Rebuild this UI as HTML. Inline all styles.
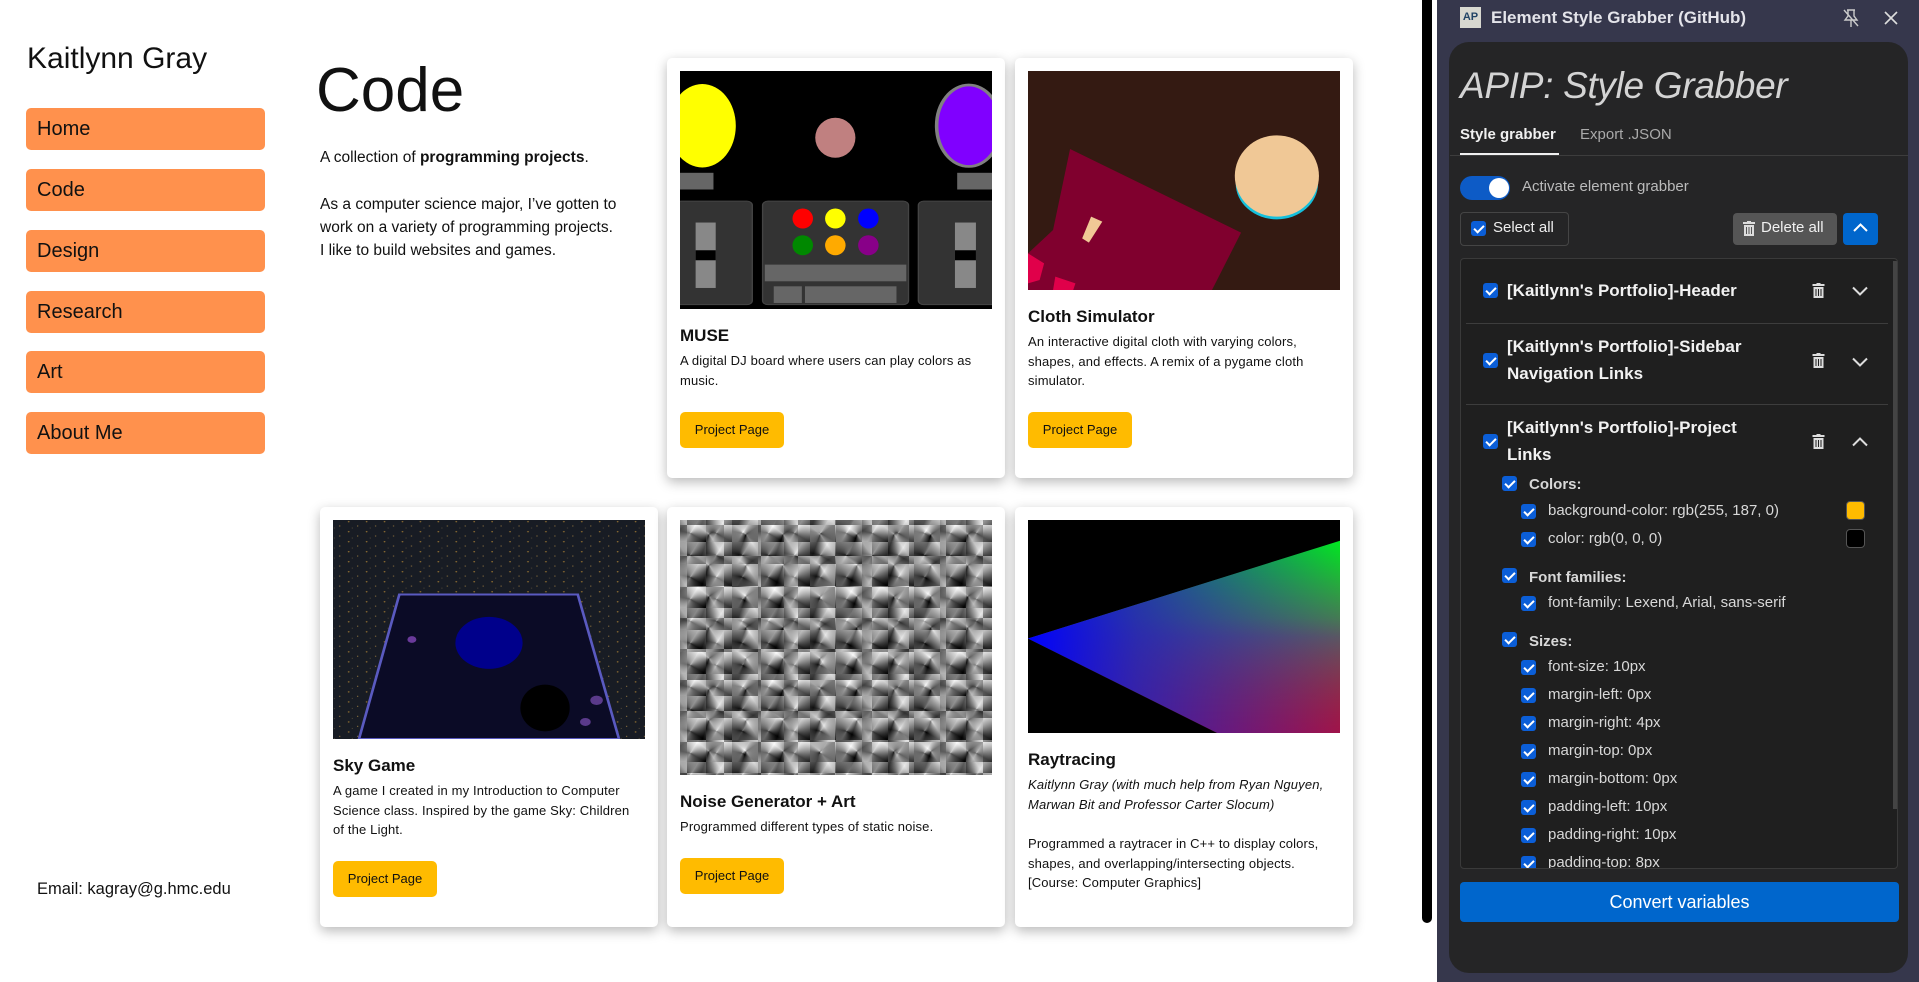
<!DOCTYPE html>
<html><head><meta charset="utf-8">
<style>
*{margin:0;padding:0;box-sizing:border-box}
body{width:1919px;height:982px;background:#fff;font-family:"Liberation Sans",Arial,sans-serif;position:relative;overflow:hidden;color:#000}
.a{position:absolute}
.nav{position:absolute;left:26px;width:239px;height:42px;background:#ff914d;border-radius:5px;font-size:20px;line-height:42px;padding-left:11px;color:#111}
.card{position:absolute;width:338px;height:420px;background:#fff;border-radius:5px;box-shadow:0 4px 12px rgba(0,0,0,.28)}
.img{position:absolute;left:13px;top:13px;width:312px;overflow:hidden}
.ct{position:absolute;left:13px;font-size:17px;font-weight:bold;color:#111;white-space:nowrap}
.cd{position:absolute;left:13px;width:318px;font-size:13px;letter-spacing:.15px;line-height:19.5px;color:#111;white-space:nowrap}
.btn{position:absolute;left:13px;width:104px;height:36px;background:#ffbb00;border-radius:5px;font-size:13px;line-height:36px;text-align:center;color:#111}
.cb{position:absolute;width:15px;height:15px;background:#0b5ed7;border-radius:3px}
.cb:after{content:"";position:absolute;left:5px;top:2px;width:4px;height:8px;border:solid #fff;border-width:0 2px 2px 0;transform:rotate(45deg)}
.it{position:absolute;left:1507px;font-size:17px;font-weight:bold;color:#f2f2f2;line-height:27px}
.sub{position:absolute;font-size:15px;color:#d8d8d8;white-space:nowrap}
.sh{position:absolute;font-size:15px;font-weight:bold;color:#d8d8d8}
.div{position:absolute;left:1466px;width:422px;height:1px;background:#3d3d3d}
</style></head><body>

<div class="a" style="left:27px;top:42px;font-size:30px;color:#111">Kaitlynn Gray</div>
<div class="nav" style="top:108px">Home</div>
<div class="nav" style="top:169px">Code</div>
<div class="nav" style="top:230px">Design</div>
<div class="nav" style="top:291px">Research</div>
<div class="nav" style="top:351px">Art</div>
<div class="nav" style="top:412px">About Me</div>
<div class="a" style="left:37px;top:880px;font-size:16.5px;color:#111">Email: kagray@g.hmc.edu</div>

<div class="a" style="left:316px;top:55px;font-size:62px;color:#111">Code</div>
<div class="a" style="left:320px;top:149px;font-size:15.5px;color:#111">A collection of <b>programming projects</b>.</div>
<div class="a" style="left:320px;top:193px;font-size:15.5px;line-height:23px;color:#111;white-space:nowrap">As a computer science major, I’ve gotten to<br>work on a variety of programming projects.<br>I like to build websites and games.</div>

<!-- MUSE -->
<div class="card" style="left:667px;top:58px">
 <div class="img" style="height:238px">
 <svg width="312" height="238" viewBox="45 63 699 713" preserveAspectRatio="none">
  <rect x="45" y="63" width="699" height="713" fill="#000"/>
  <ellipse cx="95" cy="227" rx="75" ry="125" fill="#ffff00"/>
  <ellipse cx="393" cy="263" rx="45" ry="60" fill="#c08080"/>
  <ellipse cx="692" cy="227" rx="72" ry="122" fill="#8000ff" stroke="#808080" stroke-width="8"/>
  <rect x="40" y="368" width="80" height="50" fill="#666"/>
  <rect x="666" y="368" width="80" height="50" fill="#666"/>
  <rect x="35" y="453" width="172" height="310" rx="12" fill="#333" stroke="#444" stroke-width="3"/>
  <rect x="80" y="517" width="45" height="196" fill="#888"/><rect x="80" y="600" width="45" height="30" fill="#000"/>
  <rect x="230" y="453" width="327" height="310" rx="12" fill="#333" stroke="#444" stroke-width="3"/>
  <ellipse cx="320" cy="505" rx="23" ry="30" fill="#f00"/><ellipse cx="393" cy="505" rx="23" ry="30" fill="#ff0"/><ellipse cx="467" cy="505" rx="23" ry="30" fill="#00f"/>
  <ellipse cx="320" cy="585" rx="23" ry="30" fill="#080"/><ellipse cx="393" cy="585" rx="23" ry="30" fill="#fa0"/><ellipse cx="467" cy="585" rx="23" ry="30" fill="#808"/>
  <rect x="235" y="643" width="317" height="50" fill="#666"/>
  <rect x="255" y="708" width="63" height="50" fill="#666"/><rect x="325" y="708" width="205" height="50" fill="#666"/>
  <rect x="579" y="453" width="180" height="310" rx="12" fill="#333" stroke="#444" stroke-width="3"/>
  <rect x="661" y="517" width="47" height="196" fill="#888"/><rect x="661" y="600" width="47" height="30" fill="#000"/>
 </svg></div>
 <div class="ct" style="top:268px">MUSE</div>
 <div class="cd" style="top:293px">A digital DJ board where users can play colors as<br>music.</div>
 <div class="btn" style="top:354px">Project Page</div>
</div>

<!-- Cloth -->
<div class="card" style="left:1015px;top:58px">
 <div class="img" style="height:219px">
 <svg width="312" height="219" viewBox="824 63 697 657" preserveAspectRatio="none">
  <rect x="824" y="63" width="697" height="657" fill="#341a12"/>
  <polygon points="918,297 1300,548 1235,720 824,720 824,610 880,540" fill="#80002e"/>
  <polygon points="824,610 860,640 850,690 824,700" fill="#e0004a"/>
  <polygon points="885,680 930,700 925,720 880,720" fill="#e0004a"/>
  <polygon points="965,500 990,515 960,578 945,565" fill="#f0c896"/>
  <ellipse cx="1380" cy="400" rx="92" ry="108" fill="#15c0dc"/>
  <ellipse cx="1380" cy="378" rx="94" ry="122" fill="#f0c896"/>
 </svg></div>
 <div class="ct" style="top:249px">Cloth Simulator</div>
 <div class="cd" style="top:274px">An interactive digital cloth with varying colors,<br>shapes, and effects. A remix of a pygame cloth<br>simulator.</div>
 <div class="btn" style="top:354px">Project Page</div>
</div>

<!-- Sky -->
<div class="card" style="left:320px;top:507px">
 <div class="img" style="height:219px">
 <svg width="312" height="219" viewBox="52 60 696 656" preserveAspectRatio="none">
  <defs><radialGradient id="gl" cx="0.5" cy="1" r="0.5"><stop offset="0" stop-color="#8080ff"/><stop offset="1" stop-color="#0a0a28" stop-opacity="0"/></radialGradient>
  <pattern id="st" width="40" height="30" patternUnits="userSpaceOnUse"><rect width="40" height="30" fill="#181c24"/><circle cx="7" cy="5" r="2" fill="#8a6a30"/><circle cx="27" cy="18" r="1.6" fill="#9a7a40"/><circle cx="15" cy="24" r="1.3" fill="#6a5a40"/></pattern></defs>
  <rect x="52" y="60" width="696" height="656" fill="url(#st)"/>
  <polygon points="200,283 598,283 690,716 110,716" fill="#0b0b26" stroke="#5a5ac0" stroke-width="6"/>
  <ellipse cx="400" cy="716" rx="120" ry="80" fill="url(#gl)"/>
  <ellipse cx="400" cy="428" rx="75" ry="78" fill="#00008b"/>
  <ellipse cx="525" cy="623" rx="55" ry="70" fill="#000"/>
  <circle cx="228" cy="418" r="10" fill="#6a3a9a"/>
  <circle cx="640" cy="600" r="14" fill="#5a3a8a"/><circle cx="615" cy="665" r="12" fill="#5a3a8a"/>
 </svg></div>
 <div class="ct" style="top:249px">Sky Game</div>
 <div class="cd" style="top:274px">A game I created in my Introduction to Computer<br>Science class. Inspired by the game Sky: Children<br>of the Light.</div>
 <div class="btn" style="top:354px">Project Page</div>
</div>

<!-- Noise -->
<div class="card" style="left:667px;top:507px">
 <div class="img" style="height:255px;background:
  conic-gradient(from 30deg at 40% 60%,#fff,#000 25%,#999 50%,#222 70%,#eee) 0 0/26px 22px,
  #888"></div>
 <div class="img" style="height:255px;opacity:.55;background:
  conic-gradient(from 200deg at 60% 30%,#000,#fff 30%,#555 60%,#ddd 85%,#000) 7px 5px/37px 31px"></div>
 <div class="ct" style="top:285px">Noise Generator + Art</div>
 <div class="cd" style="top:310px">Programmed different types of static noise.</div>
 <div class="btn" style="top:351px">Project Page</div>
</div>

<!-- Ray -->
<div class="card" style="left:1015px;top:507px">
 <div class="img" style="height:213px">
 <svg width="312" height="213" viewBox="84 60 933 638" preserveAspectRatio="none">
  <defs>
   <linearGradient id="v" x1="0" y1="0" x2="0" y2="1"><stop offset="0" stop-color="#00e820"/><stop offset="0.5" stop-color="#556060"/><stop offset="1" stop-color="#b83010"/></linearGradient>
   <linearGradient id="h" x1="84" y1="0" x2="1017" y2="0" gradientUnits="userSpaceOnUse"><stop offset="0" stop-color="#0000ff"/><stop offset="0.35" stop-color="#2020c0" stop-opacity=".8"/><stop offset="1" stop-color="#2020c0" stop-opacity="0"/></linearGradient>
   <linearGradient id="m" x1="0" y1="0" x2="0" y2="1"><stop offset="0.4" stop-color="#800080" stop-opacity="0"/><stop offset="1" stop-color="#900070" stop-opacity=".6"/></linearGradient>
  </defs>
  <rect x="84" y="60" width="933" height="638" fill="#000"/>
  <polygon points="84,415 1017,122 1017,698 650,698" fill="url(#v)"/>
  <polygon points="84,415 1017,122 1017,698 650,698" fill="url(#m)"/>
  <polygon points="84,415 1017,122 1017,698 650,698" fill="url(#h)"/>
 </svg></div>
 <div class="ct" style="top:243px">Raytracing</div>
 <div class="cd" style="top:268px;font-style:italic">Kaitlynn Gray (with much help from Ryan Nguyen,<br>Marwan Bit and Professor Carter Slocum)</div>
 <div class="cd" style="top:327px">Programmed a raytracer in C++ to display colors,<br>shapes, and overlapping/intersecting objects.<br>[Course: Computer Graphics]</div>
</div>

<!-- black scrollbar -->
<div class="a" style="left:1422px;top:0;width:10px;height:923px;background:#000;border-radius:0 0 5px 5px"></div>

<!-- extension panel -->
<div class="a" style="left:1437px;top:0;width:482px;height:982px;background:#36374c"></div>
<div class="a" style="left:1460px;top:7px;width:21px;height:21px;background:#d8d8d0;font-size:11px;font-weight:bold;line-height:21px;text-align:center;color:#246">AP</div>
<div class="a" style="left:1491px;top:8px;font-size:17px;font-weight:bold;color:#e4e4ea">Element Style Grabber (GitHub)</div>
<svg class="a" style="left:1842px;top:8px" width="18" height="20" viewBox="0 0 18 20" fill="none" stroke="#ccc" stroke-width="1.4"><path d="M5 2h8M6 2v6l-3 4h12l-3-4V2M9 12v7M2 2l14 16"/></svg>
<svg class="a" style="left:1884px;top:11px" width="14" height="14" viewBox="0 0 14 14" stroke="#ddd" stroke-width="1.6"><path d="M1 1l12 12M13 1L1 13"/></svg>

<div class="a" style="left:1449px;top:42px;width:459px;height:931px;background:#252526;border-radius:20px"></div>
<div class="a" style="left:1460px;top:65px;font-size:37px;font-style:italic;color:#d4d4d4;letter-spacing:-.3px;white-space:nowrap">APIP: Style Grabber</div>
<div class="a" style="left:1460px;top:126px;font-size:15px;font-weight:bold;color:#f0f0f0">Style grabber</div>
<div class="a" style="left:1580px;top:126px;font-size:15px;color:#aaa">Export .JSON</div>
<div class="a" style="left:1450px;top:155px;width:458px;height:1px;background:#3d3d3d"></div>
<div class="a" style="left:1460px;top:153px;width:99px;height:2px;background:#f0f0f0"></div>

<div class="a" style="left:1460px;top:176px;width:50px;height:24px;background:#0d5bc6;border-radius:12px"></div>
<div class="a" style="left:1489px;top:178px;width:20px;height:20px;background:#fff;border-radius:50%"></div>
<div class="a" style="left:1522px;top:178px;font-size:15px;color:#bbb">Activate element grabber</div>

<div class="a" style="left:1460px;top:212px;width:109px;height:34px;border:1px solid #454545;border-radius:4px"></div>
<div class="cb" style="left:1471px;top:221px"></div>
<div class="a" style="left:1493px;top:219px;font-size:15px;color:#eee">Select all</div>
<div class="a" style="left:1733px;top:213px;width:104px;height:32px;background:#555;border-radius:4px"></div>
<svg class="a" style="left:1743px;top:221px" width="12" height="15" viewBox="0 0 12 15" fill="#ddd"><rect x="0" y="1" width="12" height="2"/><rect x="4" y="0" width="4" height="2"/><path d="M1 4h10v11H1z M3 6v7h1V6z M5.5 6v7h1V6z M8 6v7h1V6z" fill-rule="evenodd"/></svg>
<div class="a" style="left:1761px;top:219px;font-size:15px;color:#f0f0f0">Delete all</div>
<div class="a" style="left:1843px;top:213px;width:35px;height:32px;background:#0066cc;border-radius:4px"></div>
<svg class="a" style="left:1853px;top:222px" width="15" height="12" viewBox="0 0 15 12" fill="none" stroke="#fff" stroke-width="2"><path d="M1 9l6.5-6.5L14 9"/></svg>

<div class="a" style="left:1460px;top:258px;width:438px;height:611px;background:#1f1f1f;border:1px solid #3a3a3a;border-radius:4px;overflow:hidden">
 <div class="a" style="left:432px;top:2px;width:5px;height:548px;background:#444"></div>
</div>

<div class="cb" style="left:1483px;top:283px"></div>
<div class="it" style="top:277px">[Kaitlynn's Portfolio]-Header</div>
<div class="div" style="top:323px"></div>
<div class="cb" style="left:1483px;top:353px"></div>
<div class="it" style="top:333px">[Kaitlynn's Portfolio]-Sidebar<br>Navigation Links</div>
<div class="div" style="top:404px"></div>
<div class="cb" style="left:1483px;top:434px"></div>
<div class="it" style="top:414px">[Kaitlynn's Portfolio]-Project<br>Links</div>

<svg class="a" style="left:1812px;top:283px" width="13" height="15" viewBox="0 0 12 15" fill="#ddd"><rect x="0" y="1" width="12" height="2"/><rect x="4" y="0" width="4" height="2"/><path d="M1 4h10v11H1z M3 6v7h1V6z M5.5 6v7h1V6z M8 6v7h1V6z" fill-rule="evenodd"/></svg>
<svg class="a" style="left:1812px;top:353px" width="13" height="15" viewBox="0 0 12 15" fill="#ddd"><rect x="0" y="1" width="12" height="2"/><rect x="4" y="0" width="4" height="2"/><path d="M1 4h10v11H1z M3 6v7h1V6z M5.5 6v7h1V6z M8 6v7h1V6z" fill-rule="evenodd"/></svg>
<svg class="a" style="left:1812px;top:434px" width="13" height="15" viewBox="0 0 12 15" fill="#ddd"><rect x="0" y="1" width="12" height="2"/><rect x="4" y="0" width="4" height="2"/><path d="M1 4h10v11H1z M3 6v7h1V6z M5.5 6v7h1V6z M8 6v7h1V6z" fill-rule="evenodd"/></svg>
<svg class="a" style="left:1852px;top:286px" width="16" height="10" viewBox="0 0 16 10" fill="none" stroke="#ddd" stroke-width="2"><path d="M1 1.5l7 7 7-7"/></svg>
<svg class="a" style="left:1852px;top:357px" width="16" height="10" viewBox="0 0 16 10" fill="none" stroke="#ddd" stroke-width="2"><path d="M1 1.5l7 7 7-7"/></svg>
<svg class="a" style="left:1852px;top:437px" width="16" height="10" viewBox="0 0 16 10" fill="none" stroke="#ddd" stroke-width="2"><path d="M1 8.5l7-7 7 7"/></svg>

<div class="cb" style="left:1502px;top:476px"></div><div class="sh" style="left:1529px;top:476px">Colors:</div>
<div class="cb" style="left:1521px;top:504px"></div><div class="sub" style="left:1548px;top:502px">background-color: rgb(255, 187, 0)</div>
<div class="a" style="left:1846px;top:501px;width:19px;height:19px;background:#ffbb00;border:1px solid #555;border-radius:4px"></div>
<div class="cb" style="left:1521px;top:532px"></div><div class="sub" style="left:1548px;top:530px">color: rgb(0, 0, 0)</div>
<div class="a" style="left:1846px;top:529px;width:19px;height:19px;background:#000;border:1px solid #555;border-radius:4px"></div>

<div class="cb" style="left:1502px;top:568px"></div><div class="sh" style="left:1529px;top:569px">Font families:</div>
<div class="cb" style="left:1521px;top:596px"></div><div class="sub" style="left:1548px;top:594px">font-family: Lexend, Arial, sans-serif</div>

<div class="cb" style="left:1502px;top:632px"></div><div class="sh" style="left:1529px;top:633px">Sizes:</div>
<div class="cb" style="left:1521px;top:660px"></div><div class="sub" style="left:1548px;top:658px">font-size: 10px</div>
<div class="cb" style="left:1521px;top:688px"></div><div class="sub" style="left:1548px;top:686px">margin-left: 0px</div>
<div class="cb" style="left:1521px;top:716px"></div><div class="sub" style="left:1548px;top:714px">margin-right: 4px</div>
<div class="cb" style="left:1521px;top:744px"></div><div class="sub" style="left:1548px;top:742px">margin-top: 0px</div>
<div class="cb" style="left:1521px;top:772px"></div><div class="sub" style="left:1548px;top:770px">margin-bottom: 0px</div>
<div class="cb" style="left:1521px;top:800px"></div><div class="sub" style="left:1548px;top:798px">padding-left: 10px</div>
<div class="cb" style="left:1521px;top:828px"></div><div class="sub" style="left:1548px;top:826px">padding-right: 10px</div>
<div class="a" style="left:1461px;top:850px;width:430px;height:18px;overflow:hidden">
 <div class="cb" style="left:60px;top:6px"></div><div class="sub" style="left:87px;top:4px">padding-top: 8px</div>
</div>

<div class="a" style="left:1460px;top:882px;width:439px;height:40px;background:#0066cc;border-radius:4px;font-size:18px;line-height:40px;text-align:center;color:#fff">Convert variables</div>
</body></html>
